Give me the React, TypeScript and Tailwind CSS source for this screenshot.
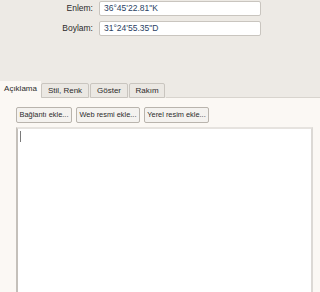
export default function App() {
  const tabs = [
    { t: "Stil, Renk", w: "w-[48px]" },
    { t: "Göster", w: "w-[38px]" },
    { t: "Rakım", w: "w-[36px]" },
  ];
  return (
    <div
      className="flex h-[292px] w-[320px] flex-col bg-[#edeae5] text-[8px] leading-none text-[#2b2b2b]"
      style={{ fontFamily: '"Liberation Sans", Arial, sans-serif' }}
    >
      <div className="flex flex-col gap-[5px] pt-[1px]">
        <div className="flex items-center">
          <span className="w-[94px] pr-[1px] text-right text-[8.5px]">Enlem:</span>
          <div className="ml-[5px] flex h-[15px] w-[162px] items-center rounded-[2px] border border-[#c9c5bf] bg-white px-[4px] text-[8.5px] text-[#2a3f63]">
            36°45'22.81"K
          </div>
        </div>
        <div className="flex items-center">
          <span className="w-[94px] pr-[1px] text-right text-[8.5px]">Boylam:</span>
          <div className="ml-[5px] flex h-[15px] w-[162px] items-center rounded-[2px] border border-[#c9c5bf] bg-white px-[4px] text-[8.5px] text-[#2a3f63]">
            31°24'55.35"D
          </div>
        </div>
      </div>
      <div className="mt-[45px] flex h-[17px] items-end">
        <div className="flex h-[17px] w-[41px] items-center justify-center bg-[#fbf8f4] pb-[1px]">
          Açıklama
        </div>
        {tabs.map((x) => (
          <div
            key={x.t}
            className={`mr-[1px] flex h-[15px] ${x.w} items-center justify-center rounded-t-[2px] border border-[#c9c5bf] bg-[#ebe8e3]`}
          >
            {x.t}
          </div>
        ))}
        <div className="h-full flex-1 border-b border-[#d8d4ce]" />
      </div>
      <div className="flex flex-1 flex-col bg-[#fbf8f4] px-[16px] pt-[9px]">
        <div className="flex gap-[4px]">
          {[
            { b: "Bağlantı ekle...", w: "w-[56px]" },
            { b: "Web resmi ekle...", w: "w-[64px]" },
            { b: "Yerel resim ekle...", w: "w-[65px]" },
          ].map((x) => (
            <div
              key={x.b}
              className={`flex h-[16px] ${x.w} items-center justify-center overflow-hidden whitespace-nowrap rounded-[2px] border border-[#b9b4ad] bg-[#f4f2ef] text-[7.4px]`}
            >
              {x.b}
            </div>
          ))}
        </div>
        <div className="mt-[4px] mr-[-9px] flex-1 border-l-2 border-t-2 border-r-2 border-l-[#c4c0ba] border-t-[#e6e3df] border-r-[#dcd9d5] bg-white pl-[2px] pt-[2px]">
          <div className="h-[11px] w-[1px] bg-[#7a7a7a]" />
        </div>
      </div>
    </div>
  );
}
